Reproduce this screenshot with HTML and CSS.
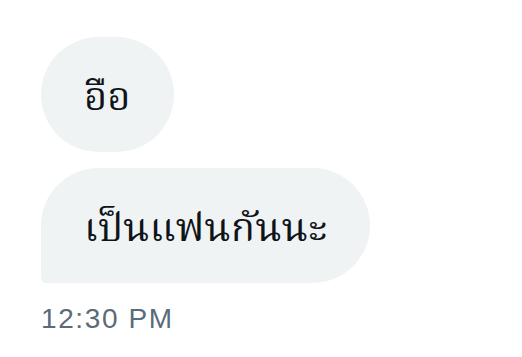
FILE: index.html
```html
<!DOCTYPE html>
<html lang="th">
<head>
    <meta charset="UTF-8">
    <meta name="viewport" content="width=device-width, initial-scale=1.0">
    <title>Chat</title>
    <link rel="stylesheet" href="styles.css">
</head>
<body>
    <div class="thread">
        <div class="bubble">อือ</div>
        <div class="bubble last">เป็นแฟนกันนะ</div>
        <div class="time">12:30 PM</div>
    </div>
</body>
</html>
```

FILE: styles.css
```css
body {
    margin: 0;
    background: #ffffff;
    font-family: "Liberation Sans", "Noto Sans", sans-serif;
}

.thread {
    display: flex;
    flex-direction: column;
    align-items: flex-start;
    gap: 16px;
    padding: 37px 0 0 41px;
}

.bubble {
    display: flex;
    align-items: center;
    height: 115px;
    padding: 8px 43px 0;
    box-sizing: border-box;
    background: #eff3f4;
    border-radius: 58px;
    color: #0f1419;
    font-family: "Noto Serif Thai", serif;
    font-size: 40px;
}

.bubble.last {
    border-bottom-left-radius: 5px;
}

.time {
    margin-top: 4px;
    color: #5b6b77;
    font-size: 28px;
    letter-spacing: 1.6px;
}
```
